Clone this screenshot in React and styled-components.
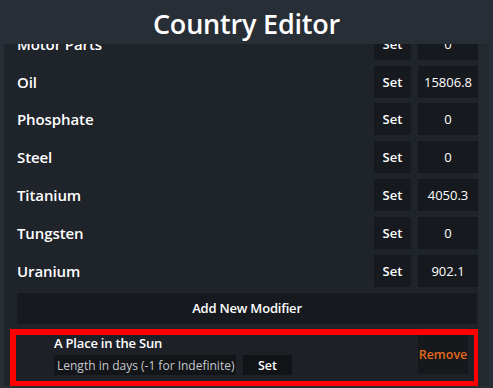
import React from 'react'
import styled, { createGlobalStyle } from 'styled-components'

const GlobalStyle = createGlobalStyle`
    body{
        margin:0;
        background:#282e36;
        font-family:"Open Sans","Noto Sans",sans-serif;
    }
`

const resources = [
    { name: 'Motor Parts', value: '0' },
    { name: 'Oil', value: '15806.8' },
    { name: 'Phosphate', value: '0' },
    { name: 'Steel', value: '0' },
    { name: 'Titanium', value: '4050.3' },
    { name: 'Tungsten', value: '0' },
    { name: 'Uranium', value: '902.1' },
]

function App() {
    return (
        <>
            <GlobalStyle />
            <Frame>
                <Header>Country Editor</Header>
                <Panel>
                    <Scroll>
                        <List>
                            {resources.map((r) => (
                                <Row key={r.name}>
                                    <Label>{r.name}</Label>
                                    <SetButton>Set</SetButton>
                                    <ValueBox>{r.value}</ValueBox>
                                </Row>
                            ))}
                            <AddButton>Add New Modifier</AddButton>
                            <Modifier>
                                <ModBody>
                                    <ModTitle>A Place in the Sun</ModTitle>
                                    <ModControls>
                                        <DaysInput>Length in days (-1 for Indefinite)</DaysInput>
                                        <ModSet>Set</ModSet>
                                    </ModControls>
                                </ModBody>
                                <RemoveButton>Remove</RemoveButton>
                            </Modifier>
                        </List>
                    </Scroll>
                    <Track />
                </Panel>
            </Frame>
        </>
    )
}

const Frame = styled.div`
    width:493px;
    height:388px;
    display:flex;
    flex-direction:column;
    overflow:hidden;
    background:#282e36;
`
const Header = styled.div`
    height:44px;
    flex-shrink:0;
    display:flex;
    justify-content:center;
    align-items:center;
    color:#ffffff;
    font-size:27px;
    font-weight:600;
    letter-spacing:-0.2px;
    padding-top:2px;
    box-sizing:border-box;
`
const Panel = styled.div`
    margin-left:4px;
    width:485px;
    height:342px;
    display:flex;
    background:#1f232a;
`
const Scroll = styled.div`
    width:474px;
    height:100%;
    overflow:hidden;
`
const Track = styled.div`
    flex:1;
    background:#242930;
`
const List = styled.div`
    margin-top:-19px;
    display:flex;
    flex-direction:column;
`
const Row = styled.div`
    height:37.8px;
    display:flex;
    align-items:center;
    padding-left:13px;
    gap:7px;
`
const Label = styled.div`
    flex:1;
    color:#ffffff;
    font-size:15px;
    font-weight:600;
    letter-spacing:-0.1px;
`
const Box = styled.div`
    height:32px;
    display:flex;
    align-items:center;
    justify-content:center;
    background:#16191e;
    color:#ffffff;
    font-size:13px;
`
const SetButton = styled(Box)`
    width:37px;
    font-weight:600;
`
const ValueBox = styled(Box)`
    width:60px;
`
const AddButton = styled.div`
    margin:3px 1px 0 13px;
    height:31px;
    display:flex;
    align-items:center;
    justify-content:center;
    background:#16191e;
    color:#ffffff;
    font-size:13px;
    font-weight:600;
    letter-spacing:-0.2px;
`
const Modifier = styled.div`
    margin:11px 0 0 12px;
    width:458px;
    height:46px;
    box-sizing:border-box;
    outline:6px solid #ff0000;
    background:#1d2127;
    display:flex;
    align-items:center;
    padding:0 6px 0 38px;
`
const ModBody = styled.div`
    flex:1;
    display:flex;
    flex-direction:column;
    gap:4px;
`
const ModTitle = styled.div`
    color:#ffffff;
    font-size:13px;
    font-weight:600;
    letter-spacing:-0.2px;
    line-height:16px;
    margin-top:-5px;
`
const ModControls = styled.div`
    display:flex;
    gap:7px;
`
const DaysInput = styled.div`
    width:182px;
    height:20px;
    background:#131519;
    color:#c6c8cc;
    font-size:12px;
    display:flex;
    align-items:center;
    padding-left:3px;
    box-sizing:border-box;
    white-space:nowrap;
`
const ModSet = styled.div`
    width:49px;
    height:20px;
    background:#111316;
    color:#ffffff;
    font-size:12.5px;
    font-weight:600;
    display:flex;
    align-items:center;
    justify-content:center;
`
const RemoveButton = styled.div`
    width:50px;
    height:39px;
    margin-top:-7px;
    background:#16181c;
    color:#e0691d;
    font-size:12.5px;
    font-weight:600;
    display:flex;
    align-items:center;
    justify-content:center;
`

export default App
